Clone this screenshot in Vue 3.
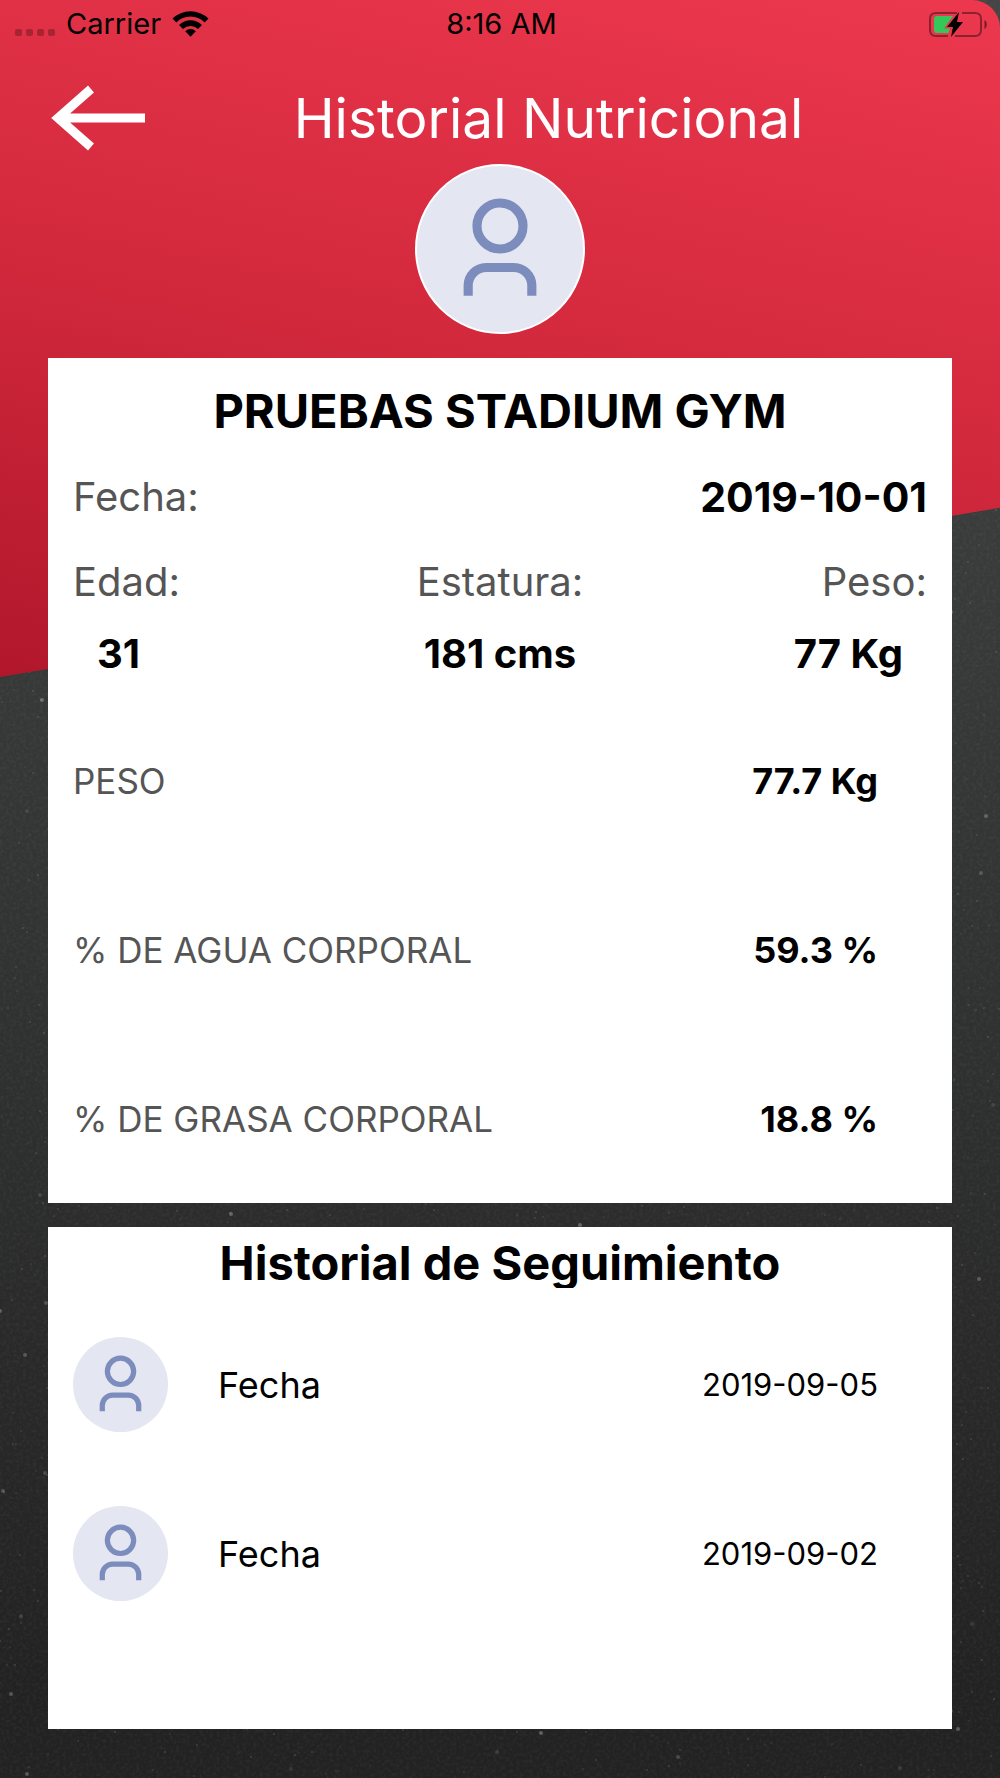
<script setup>
const measures = [
  { label: 'PESO', value: '77.7 Kg' },
  { label: '% DE AGUA CORPORAL', value: '59.3 %' },
  { label: '% DE GRASA CORPORAL', value: '18.8 %' }
]

const history = ['2019-09-05', '2019-09-02']

// Seeded generator so the dust on the backdrop is the same on every load
let seed = 7
const random = () => {
  seed = (seed * 16807) % 2147483647
  return seed / 2147483647
}
const specks = Array.from({ length: 2600 }, () => {
  const bright = random() > 0.9
  return {
    x: Math.round(random() * 1000),
    y: Math.round(random() * 1778),
    r: bright ? 2 : 1,
    o: bright ? 0.12 + random() * 0.3 : 0.05 + random() * 0.16
  }
})
</script>

<template>
  <div class="screen">
    <svg class="dust" viewBox="0 0 1000 1778" preserveAspectRatio="xMidYMid slice" aria-hidden="true">
      <filter id="grain">
        <feTurbulence type="fractalNoise" baseFrequency="0.3" numOctaves="2" seed="4" />
        <feColorMatrix values="0 0 0 0 1  0 0 0 0 1  0 0 0 0 1  0.5 0 0 0 -0.2" />
      </filter>
      <rect width="1000" height="1778" filter="url(#grain)" opacity="0.2" />
      <circle v-for="(s, i) in specks" :key="i" :cx="s.x" :cy="s.y" :r="s.r" fill="#c9bfbb" :opacity="s.o" />
    </svg>
    <div class="banner" aria-hidden="true"></div>

    <div class="status">
      <div class="carrier">
        <span class="signal"><i></i><i></i><i></i><i></i></span>
        <span>Carrier</span>
        <svg class="wifi" viewBox="0 0 37 28" aria-label="Wi-Fi">
          <path d="M0.5 8.5 A26 26 0 0 1 36.500 8.500 L32.600 12.400 A20 20 0 0 0 4.400 12.400 Z" />
          <path d="M7 15 A16.500 16.500 0 0 1 30 15 L26 19 A11 11 0 0 0 11 19 Z" />
          <path d="M13.200 21.300 A7.500 7.500 0 0 1 23.800 21.300 L18.500 26.800 Z" />
        </svg>
      </div>
      <span>8:16 AM</span>
      <svg class="battery" viewBox="0 0 60 30" aria-label="Batería">
        <path
          d="M29 4 H8 Q2 4 2 10 V21 Q2 27 8 27 H20 M27 27 H47 Q53 27 53 21 V10 Q53 4 47 4 H34"
          fill="none" stroke="#000" stroke-opacity="0.4" stroke-width="2"
        />
        <path d="M56.500 11 C59.500 12.500 59.500 18.500 56.500 20 Z" fill="#000" fill-opacity="0.5" />
        <path d="M9 7 H25 L16 19.500 H22 L20.500 24 H9 Q6 24 6 21 V10 Q6 7 9 7 Z" fill="#34c759" />
        <path d="M31 3 L19 18 H25 L23 28 L35 13 H29 Z" />
      </svg>
    </div>

    <header class="bar">
      <button class="back" type="button" aria-label="Volver">
        <svg viewBox="0 0 94 66"><path d="M40 4 L7 33 L40 62 M7 33 H94" fill="none" stroke="#fff" stroke-width="9" /></svg>
      </button>
      <h1>Historial Nutricional</h1>
    </header>

    <svg class="avatar large" viewBox="0 0 96 96" aria-hidden="true">
      <circle cx="48" cy="34.700" r="13.300" />
      <path d="M29.600 75 V69 A10.500 10.500 0 0 1 40 58.700 H56 A10.500 10.500 0 0 1 66.400 69 V75" />
    </svg>

    <section class="card profile">
      <h2>PRUEBAS STADIUM GYM</h2>
      <div class="date"><span>Fecha:</span><strong>2019-10-01</strong></div>
      <dl class="stats">
        <div><dt>Edad:</dt><dd>31</dd></div>
        <div><dt>Estatura:</dt><dd>181 cms</dd></div>
        <div><dt>Peso:</dt><dd>77 Kg</dd></div>
      </dl>
      <dl class="measures">
        <div v-for="m in measures" :key="m.label"><dt>{{ m.label }}</dt><dd>{{ m.value }}</dd></div>
      </dl>
    </section>

    <section class="card history">
      <h2>Historial de Seguimiento</h2>
      <ul>
        <li v-for="date in history" :key="date">
          <svg class="avatar" viewBox="0 0 96 96" aria-hidden="true">
            <circle cx="48" cy="34.700" r="13.300" />
            <path d="M29.600 75 V69 A10.500 10.500 0 0 1 40 58.700 H56 A10.500 10.500 0 0 1 66.400 69 V75" />
          </svg>
          <span>Fecha</span>
          <time :datetime="date">{{ date }}</time>
        </li>
      </ul>
    </section>
  </div>
</template>

<style>
body { margin: 0; background: #242424; }
</style>

<style scoped>
.screen {
  position: relative;
  isolation: isolate;
  display: flex;
  flex-direction: column;
  min-height: 100vh;
  box-sizing: border-box;
  padding-bottom: 48px;
  overflow: hidden;
  background: linear-gradient(#444, #383939 35%, #222 95%);
  font-family: Inter, sans-serif;
  color: #000;
}
.dust, .banner { position: absolute; inset: 0; z-index: -1; width: 100%; }
.dust { height: 100%; }
.banner {
  height: 677px;
  border-top-right-radius: 28px;
  background: linear-gradient(192deg, #ed384e, #d3293d 50%, #b1172b);
  clip-path: polygon(0 0, 100% 0, 100% 75%, 0 100%);
}
h1, h2, dl, dd, ul { margin: 0; padding: 0; }

.status {
  display: grid;
  grid-template-columns: 1fr auto 1fr;
  align-items: center;
  height: 47px;
  padding: 0 12px 0 15px;
  font-size: 29px;
}
.carrier { display: flex; align-items: center; gap: 11px; }
.signal { display: flex; gap: 4px; padding-top: 18px; }
.signal i { width: 7px; height: 7px; border-radius: 2px; background: rgba(0, 0, 0, 0.25); }
.wifi { width: 37px; height: 28px; }
.battery { justify-self: end; width: 60px; height: 30px; }

.bar { display: flex; align-items: center; height: 93px; padding: 24px 48px 0; }
.back { flex: none; height: 66px; padding: 0 0 0 3px; border: 0; background: none; }
.back svg { display: block; width: 94px; height: 66px; }
h1 { flex: 1; text-align: center; font-size: 55px; font-weight: 400; color: #fff; }

.avatar {
  flex: none;
  width: 95px;
  height: 95px;
  border-radius: 50%;
  background: #e4e6f1;
  fill: none;
  stroke: #7c8dbd;
  stroke-width: 5.3px;
}
.large { width: 166px; height: 166px; align-self: center; border: 2px solid #fff; }

.card { margin: 24px 48px 0; padding: 0 25px; background: #fff; }
h2 { text-align: center; font-size: 47px; font-weight: 700; }
.profile h2 { line-height: 106px; }
.date { display: flex; justify-content: space-between; line-height: 66px; font-size: 40px; }
.date strong { font-size: 41px; }
.date span, dt { color: #555; }
.stats { display: grid; grid-template-columns: repeat(3, 1fr); padding: 16px 0 6px; font-size: 40px; line-height: 72px; text-align: center; }
.stats div:first-child { text-align: left; }
.stats div:last-child { text-align: right; }
.stats dd { padding: 0 24px; }
dd { font-weight: 700; }
.measures div { display: flex; justify-content: space-between; align-items: center; height: 169px; padding-right: 49px; font-size: 36px; }
.measures dt { font-size: 35px; }

.history { padding-top: 11px; height: 491px; }
.history h2 { height: 50px; line-height: 50px; overflow: hidden; }
ul { list-style: none; }
.history ul { padding-top: 12px; }
li { display: flex; align-items: center; height: 169px; padding-right: 49px; font-size: 36px; }
li span { flex: 1; padding-left: 50px; }
time { font-size: 31px; }
</style>
